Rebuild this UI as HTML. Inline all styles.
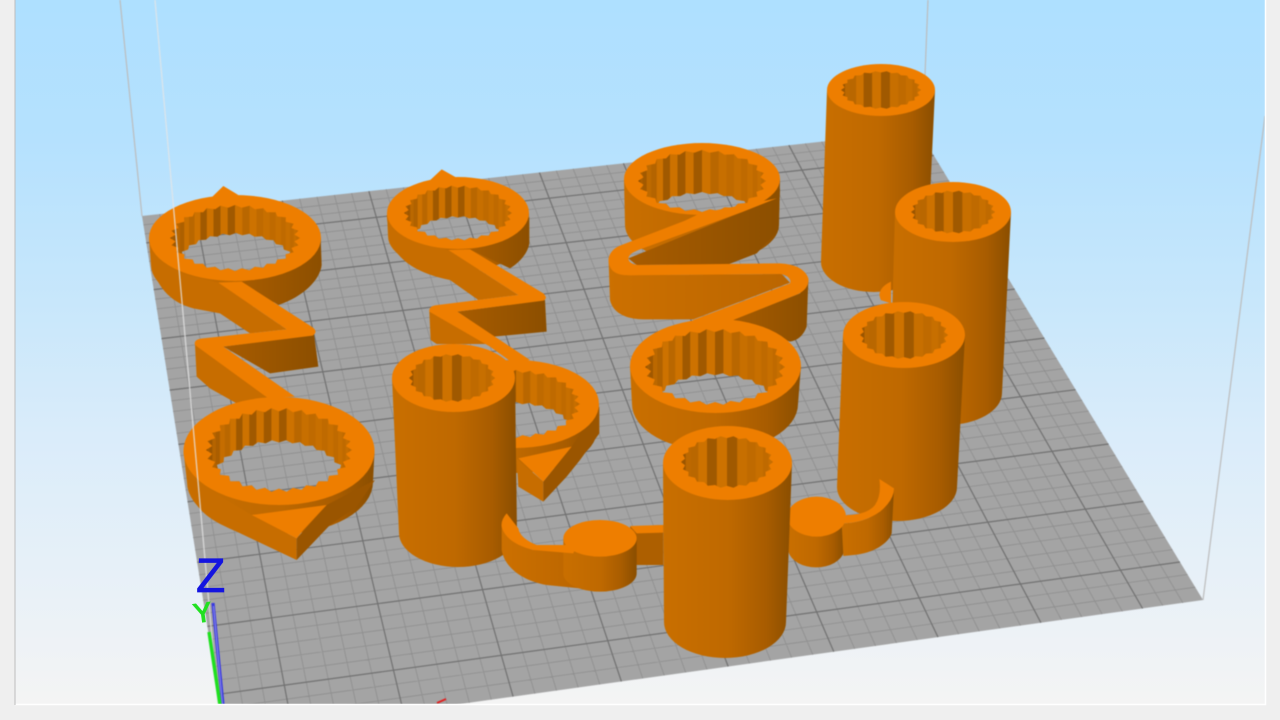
<!DOCTYPE html>
<html>
<head>
<meta charset="utf-8">
<title>3D print preview</title>
<style>
html,body{margin:0;padding:0;background:#efefef;width:1280px;height:720px;overflow:hidden}
svg{display:block;position:absolute;left:0;top:0}
#scene{filter:blur(.55px)}
</style>
</head>
<body>
<svg xmlns="http://www.w3.org/2000/svg" width="1280" height="720" viewBox="0 0 1280 720">
<defs>
<linearGradient id="sky" gradientUnits="userSpaceOnUse" x1="0" y1="0" x2="0" y2="705">
<stop offset="0" stop-color="#aee0ff"/><stop offset=".2" stop-color="#b5e1fe"/><stop offset=".43" stop-color="#c8e7fb"/><stop offset=".62" stop-color="#daecfa"/><stop offset=".8" stop-color="#e6f0f8"/><stop offset="1" stop-color="#f4f4f4"/>
</linearGradient>
<linearGradient id="gs" x1="0" y1="0" x2="1" y2="0">
<stop offset="0" stop-color="#c96f00"/><stop offset=".5" stop-color="#bf6900"/><stop offset=".8" stop-color="#a85c00"/><stop offset="1" stop-color="#8a4e00"/>
</linearGradient>
<linearGradient id="gd" x1="0" y1="0" x2="1" y2="0">
<stop offset="0" stop-color="#a85c00"/><stop offset="1" stop-color="#8c4f00"/>
</linearGradient>
<linearGradient id="gm" x1="0" y1="0" x2="1" y2="0">
<stop offset="0" stop-color="#cc7000"/><stop offset="1" stop-color="#bb6600"/>
</linearGradient>
</defs>
<rect width="1280" height="720" fill="#efefef"/>
<rect x="15" y="0" width="1250" height="705" fill="url(#sky)"/>
<g id="scene"></g>
<rect x="0" y="705" width="1280" height="15" fill="#efefef"/>
<rect x="1266" y="0" width="14" height="720" fill="#efefef"/>
<path d="M15 704.500H1265.500V0" fill="none" stroke="#fff" stroke-width="1.500"/>
<path d="M15 0V705" stroke="#bdbdbd" stroke-width="1"/>
<text x="196" y="592" font-size="48" fill="#1414e0" stroke="#1414e0" stroke-width=".8" font-family="Liberation Sans, sans-serif">Z</text>
<text x="0" y="0" font-size="27" fill="#22e022" stroke="#22e022" stroke-width="1.200" font-family="Liberation Sans, sans-serif" transform="translate(195 623) rotate(-8)">Y</text>
</svg>
<script>
(function(){
var T='#ee7e00',M='url(#gm)';
var s='';
var q=[[142,216],[919,131],[1203,600],[225,737]];
var x0=q[0][0],y0=q[0][1],x1=q[1][0],y1=q[1][1],x2=q[2][0],y2=q[2][1],x3=q[3][0],y3=q[3][1];
var dx1=x1-x2,dx2=x3-x2,dx3=x0-x1+x2-x3,dy1=y1-y2,dy2=y3-y2,dy3=y0-y1+y2-y3;
var den=dx1*dy2-dx2*dy1;
var g=(dx3*dy2-dx2*dy3)/den,h=(dx1*dy3-dx3*dy1)/den;
var a=x1-x0+g*x1,b=x3-x0+h*x3,c=x0,d=y1-y0+g*y1,e=y3-y0+h*y3,f=y0;
function P(u,v){var w=g*u+h*v+1;return ((a*u+b*v+c)/w).toFixed(1)+' '+((d*u+e*v+f)/w).toFixed(1);}
var minor='',major='',N=46;
for(var i=1;i<N;i++){
  var t=i/N,l='M'+P(t,0)+'L'+P(t,1)+'M'+P(0,t)+'L'+P(1,t);
  if(i%5==3)major+=l;else minor+=l;
}
s+='<g id="pl"><polygon points="'+q.map(function(p){return p.join(',')}).join(' ')+'" fill="#a4a4a4"/>';
s+='<path d="'+minor+'" stroke="#8e8e8e" stroke-width=".8" fill="none"/>';
s+='<path d="'+major+'" stroke="#717171" stroke-width="1.200" fill="none"/></g>';
s+='<path d="M120 0L142 216M928 0L925 75M1265 116L1203 600" stroke="#bcbcbc" stroke-width="1.200" fill="none"/>';

function side(cx,cy,rx,cx2,cy2,rx2,ry2){
  s+='<path d="M'+(cx-rx)+' '+cy+'L'+(cx2-rx2)+' '+cy2+'A'+rx2+' '+ry2+' 0 0 0 '+(cx2+rx2)+' '+cy2+'L'+(cx+rx)+' '+cy+'Z" fill="url(#gs)"/>';
}
function top(cx,cy,rx,ry){s+='<ellipse cx="'+cx+'" cy="'+cy+'" rx="'+rx+'" ry="'+ry+'" fill="'+T+'"/>';}
function serr(cx,cy,rx,ry,n,amp){
  var p=[];
  for(var i=0;i<2*n;i++){var an=i*Math.PI/n,r=i%2?1-amp:1;
    p.push((cx+rx*r*Math.cos(an)).toFixed(1)+','+(cy+ry*r*Math.sin(an)).toFixed(1));}
  return p.join(' ');
}
var cid=0;
function bore(cx,cy,rx,ry,n,fl){
  var id=++cid;
  s+='<clipPath id="b'+id+'"><polygon points="'+serr(cx,cy,rx,ry,n,.08)+'"/></clipPath><g clip-path="url(#b'+id+')">';
  var m=fl?n:Math.round(n*.62);
  for(var i=0;i<m;i++){
    var th0=Math.PI*(1-i/m),th1=Math.PI*(1-(i+1)/m);
    var xa=cx+rx*Math.cos(th0),xb=cx+rx*Math.cos(th1);
    var t=(i+.5)/m,r,gg;
    if(t<.25){var k=t/.25;r=145+60*k;gg=80+34*k;}else{r=205;gg=114;}
    var mul=(i%2)?.9:1; if(t>.3&&t<.55&&i%2)mul=.78; if(t>.6)mul=mul>.95?.97:.93;
    s+='<rect x="'+xa.toFixed(1)+'" y="'+(cy-ry-3)+'" width="'+(xb-xa+.6).toFixed(1)+'" height="'+(2*ry+6)+'" fill="rgb('+Math.round(r*mul)+','+Math.round(gg*mul)+',0)"/>';
  }
  if(fl){
    s+='<clipPath id="f'+id+'"><polygon points="'+serr(fl[0],fl[1],fl[2],fl[3],n,.06)+'"/></clipPath><g clip-path="url(#f'+id+')"><use href="#pl"/></g>';
  }
  s+='</g>';
}
function fr(x,y,inner){s+='<g transform="translate('+x+' '+y+') scale(.33333)">'+inner+'</g>';}
function pg(pts,fill){return '<polygon points="'+pts+'" fill="'+fill+'"/>';}
function pa(dd,fill){return '<path d="'+dd+'" fill="'+fill+'"/>';}
function el(cx,cy,rx,ry,fill){return '<ellipse cx="'+cx+'" cy="'+cy+'" rx="'+rx+'" ry="'+ry+'" fill="'+fill+'"/>';}

/* R1 top ring */
side(235,238,86,235,265,84,42);
fr(130,170,
 pa('M58,215 L66,290 C85,360 130,400 190,415 L270,430 L360,490 L470,478 L265,338 L150,310 Z','#c76d00')+
 pa('M335,335 L445,405 C520,380 570,330 575,285 L572,205 C550,270 450,320 335,335 Z','url(#gd)')+
 pg('280,530 552,493 565,590 420,610','url(#gd)')+
 pg('195,525 200,620 240,655 320,700 420,685 280,530','#c76d00')+
 pg('245,82 280,48 325,75',T));
top(235,238,86,43);
bore(235,238,65,33,28,[236,266,60,33]);
fr(130,170,pa('M335,335 L548,472 Q565,485 548,497 L280,530 L495,680 L415,685 L195,525 Q190,510 212,506 L470,478 L265,338 Z',T));
/* R1 lower ring */
side(279,451,95.5,280,482,93,52);
fr(130,170,
 pa('M172,920 L190,985 C210,1030 250,1055 320,1085 L500,1170 L500,1105 L365,1035 Z','#c76d00')+
 pg('500,1105 590,1005 735,930 680,1010 600,1065 500,1170','#9a5500')+
 pg('365,1035 590,1005 520,1080 500,1105',T));
top(279,451,95.5,54);
bore(279,450,73,42,30,[279,482,68,42]);

/* R2 top ring */
side(458,213,71,458,236,70,35);
fr(380,160,
 pa('M20,165 L28,235 C50,300 110,340 210,360 L295,420 L415,405 L205,270 L100,240 Z','#c76d00')+
 pa('M270,268 L390,325 C430,300 445,270 448,250 L448,170 C420,230 350,255 270,268 Z','url(#gd)')+
 pg('232,455 495,420 500,515 340,530','url(#gd)')+
 pg('148,455 152,540 170,552 345,552 380,565 232,455','#c76d00')+
 pg('140,70 185,28 228,52',T));
top(458,213,71,36);
bore(458,213,54,27.5,26,[458,243,49,27]);
fr(380,160,pa('M270,268 L490,400 Q505,415 490,422 L232,455 L450,600 L400,610 L330,560 L148,455 Q145,440 165,436 L415,405 L205,270 Z',T));
/* R2 lower ring */
side(516,404,83,516,430,81,43);
fr(380,160,
 pg('410,895 415,980 490,1025 490,965','#c76d00')+
 pg('490,965 575,860 658,740 658,820 600,900 560,950 490,1025','#9a5500')+
 pg('415,895 575,860 490,965',T));
top(516,404,83,44);
bore(516,404,64,34,28,[516,436,60,34]);
/* Cylinder B */
side(453.5,378,61.5,458,533,59,34);
top(453.5,378,61.5,34);
bore(452,378,43,24,22);

/* R3 top ring + strip */
side(702,179,78,702,225,77,38);
fr(600,130,
 pg('85,385 430,245 540,175 535,300 470,370 385,403 110,405','url(#gd)')+
 pa('M26,395 L30,510 C40,555 90,568 130,568 L280,568 L570,458 L545,432 L85,435 Z','url(#gm)')+
 pa('M625,450 L620,590 Q605,630 570,635 L390,572 L600,490 Z','url(#gd)'));
top(702,179,78,36);
bore(702,181,64,31,24,[702,223,60,31]);
fr(600,130,pa('M255,272 L60,347 C25,362 22,390 28,405 C35,430 60,436 90,436 L540,432 C565,435 575,450 570,460 L275,572 L395,572 L595,492 C615,482 628,465 625,445 C615,415 580,400 530,400 L115,405 C90,403 80,390 88,378 C92,370 105,365 115,360 L430,245 L530,205 L300,250 Z',T));
/* R3 lower ring */
side(715.5,366,85.5,715,404,83,47);
top(715.5,366,85.5,47);
bore(715,367,70,38,26,[715,411,65,38]);

/* Cylinder C */
side(881,90,54,874,262,53,30);
top(881,90,54,26);
bore(881,90,40,19,22);
fr(810,50,pa('M243,695 Q210,710 208,735 L212,750 L243,760Z',T));
/* Cylinder D */
side(953,212,58,946,393,56,32);
top(953,212,58,30);
bore(953,212,42,21.5,22);
/* Cylinder E */
side(904,335,61,897,487,60,34);
top(904,335,61,33);
bore(904,335,44,24,22);

/* Left clip */
fr(380,160,
 pg('750,1100 850,1095 850,1215 770,1215','#ad5f00')+
 pg('750,1098 850,1095 850,1118 770,1120',T)+
 pa('M365,1090 L365,1170 C375,1230 440,1265 500,1275 L600,1285 L600,1170 L460,1170 C400,1150 370,1120 365,1090 Z','url(#gm)')+
 pa('M550,1135 L550,1240 A110,55 0 0 0 770,1240 L770,1135 Z','url(#gs)')+
 pa('M380,1060 Q362,1080 365,1100 C375,1140 420,1160 460,1170 L580,1180 L590,1155 L470,1155 Q420,1135 415,1105 Z',T)+
 el(660,1135,110,55,T));
/* Right clip */
fr(640,400,
 pa('M445,350 L445,455 A85,58 0 0 0 612,455 L612,350 Z','url(#gs)')+
 pa('M605,370 L610,468 L640,465 C700,460 745,430 755,400 L762,265 Q762,300 720,335 Q670,370 605,370 Z','url(#gs)')+
 pa('M620,345 Q680,345 705,315 Q725,285 718,237 L762,265 Q762,300 720,335 Q670,370 605,370 Z',T)+
 el(530,350,88,60,T));
/* Cylinder A */
side(727.5,463,64.5,725,622,61,36);
top(727.5,463,64.5,37);
bore(727,462,46,26,22);

s+='<path d="M155 0L218 705" stroke="#e6e6e6" stroke-width="1.400" opacity=".75" fill="none"/>';
s+='<path d="M213 603L223 705" stroke="#3838e0" stroke-width="3.200" fill="none"/>';
s+='<path d="M213.500 606L222.500 705" stroke="#9a9ae8" stroke-width=".9" fill="none"/>';
s+='<path d="M209 632L220 705" stroke="#1fe01f" stroke-width="3.400" fill="none"/>';
s+='<path d="M437 703L446 699" stroke="#e02020" stroke-width="2" fill="none"/>';
document.getElementById('scene').innerHTML=s;
})();
</script>
</body>
</html>
